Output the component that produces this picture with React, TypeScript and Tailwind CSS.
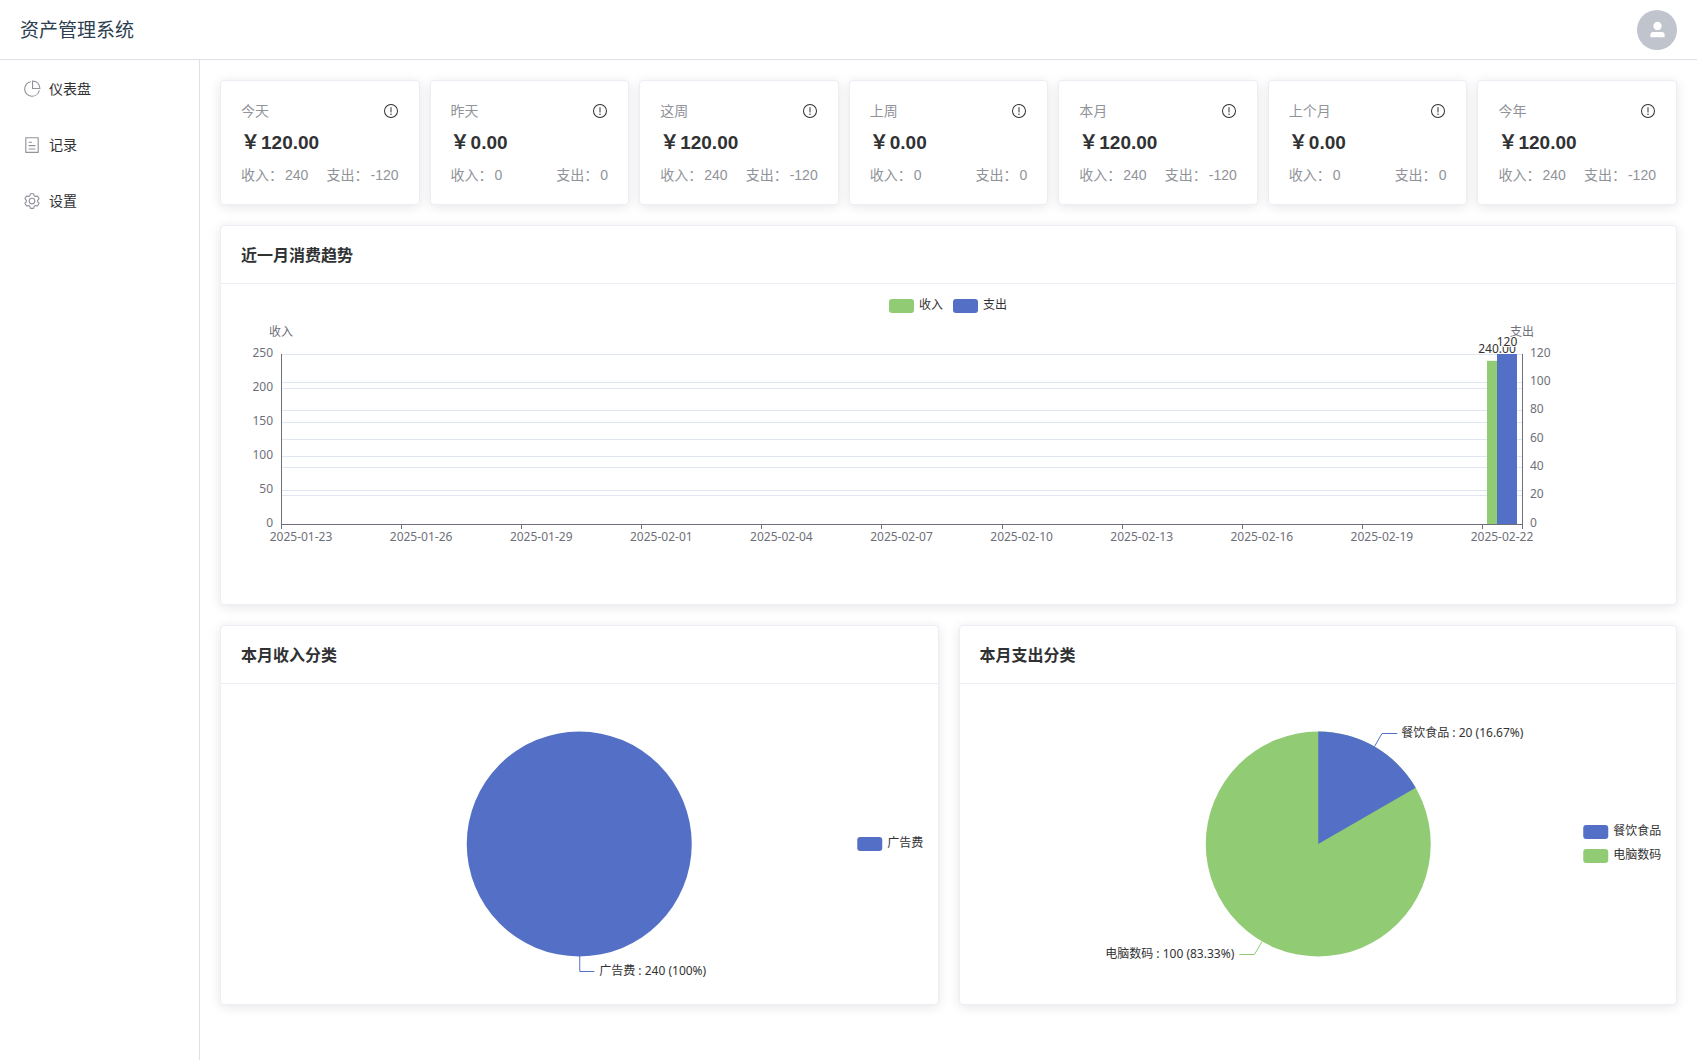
import type { ReactNode } from 'react'

const ICONS = {
    pie: 'M448 68.48v64.832A384.128 384.128 0 0 0 512 896a384.128 384.128 0 0 0 378.688-320h64.768A448.128 448.128 0 0 1 64 512 448.128 448.128 0 0 1 448 68.48z M576 97.28V448h350.72A384.064 384.064 0 0 0 576 97.28zM512 64V33.152A448 448 0 0 1 990.848 512H512V64z',
    tickets: 'M192 128v768h640V128H192zm-32-64h704a32 32 0 0 1 32 32v832a32 32 0 0 1-32 32H160a32 32 0 0 1-32-32V96a32 32 0 0 1 32-32zm160 448h384v64H320v-64zm0-192h192v64H320v-64zm0 384h384v64H320v-64z',
    setting: 'M600.704 64a32 32 0 0 1 30.464 22.208l35.2 109.376c14.784 7.232 28.928 15.36 42.432 24.512l112.384-24.192a32 32 0 0 1 34.432 15.36L944.32 364.8a32 32 0 0 1-4.032 37.504l-77.12 85.12a357.12 357.12 0 0 1 0 49.024l77.12 85.248a32 32 0 0 1 4.032 37.504l-88.704 153.6a32 32 0 0 1-34.432 15.296L708.8 803.904c-13.44 9.088-27.648 17.28-42.368 24.512l-35.264 109.376A32 32 0 0 1 600.704 960H423.296a32 32 0 0 1-30.464-22.208L357.696 828.48a351.616 351.616 0 0 1-42.56-24.64l-112.32 24.256a32 32 0 0 1-34.432-15.36L79.68 659.2a32 32 0 0 1 4.032-37.504l77.12-85.248a357.12 357.12 0 0 1 0-48.896l-77.12-85.248A32 32 0 0 1 79.68 364.8l88.704-153.6a32 32 0 0 1 34.432-15.296l112.32 24.256c13.568-9.152 27.776-17.408 42.56-24.64l35.2-109.312A32 32 0 0 1 423.232 64H600.64zm-23.424 64H446.72l-36.352 113.088-24.512 11.968a294.113 294.113 0 0 0-34.816 20.096l-22.656 15.36-116.224-25.088-65.28 113.152 79.68 88.192-1.92 27.136a293.12 293.12 0 0 0 0 40.192l1.92 27.136-79.808 88.192 65.344 113.152 116.224-25.024 22.656 15.296a294.113 294.113 0 0 0 34.816 20.096l24.512 11.968L446.72 896h130.688l36.48-113.152 24.448-11.904a288.282 288.282 0 0 0 34.752-20.096l22.592-15.296 116.288 25.024 65.28-113.152-79.744-88.192 1.92-27.136a293.12 293.12 0 0 0 0-40.256l-1.92-27.136 79.808-88.128-65.344-113.152-116.288 24.96-22.592-15.232a287.616 287.616 0 0 0-34.752-20.096l-24.448-11.904L577.344 128zM512 320a192 192 0 1 1 0 384 192 192 0 0 1 0-384zm0 64a128 128 0 1 0 0 256 128 128 0 0 0 0-256z',
    warning: 'M512 64a448 448 0 1 1 0 896 448 448 0 0 1 0-896zm0 832a384 384 0 0 0 0-768 384 384 0 0 0 0 768zm48-176a48 48 0 1 1-96 0 48 48 0 0 1 96 0zm-48-464a32 32 0 0 1 32 32v288a32 32 0 0 1-64 0V288a32 32 0 0 1 32-32z',
    user: 'M288 320a224 224 0 1 0 448 0 224 224 0 1 0-448 0zm544 608H160a32 32 0 0 1-32-32v-96a160 160 0 0 1 160-160h448a160 160 0 0 1 160 160v96a32 32 0 0 1-32 32z',
}

const MENU = [
    { label: '仪表盘', icon: ICONS.pie },
    { label: '记录', icon: ICONS.tickets },
    { label: '设置', icon: ICONS.setting },
]

const STATS = [
    { label: '今天', total: '120.00', income: '240', expense: '-120' },
    { label: '昨天', total: '0.00', income: '0', expense: '0' },
    { label: '这周', total: '120.00', income: '240', expense: '-120' },
    { label: '上周', total: '0.00', income: '0', expense: '0' },
    { label: '本月', total: '120.00', income: '240', expense: '-120' },
    { label: '上个月', total: '0.00', income: '0', expense: '0' },
    { label: '今年', total: '120.00', income: '240', expense: '-120' },
]

const DATES = ['2025-01-23', '2025-01-26', '2025-01-29', '2025-02-01', '2025-02-04', '2025-02-07', '2025-02-10', '2025-02-13', '2025-02-16', '2025-02-19', '2025-02-22']

const BLUE = '#5470c6'
const GREEN = '#91cc75'
const AXIS = '#6e7079'

// plot area of the trend chart
const LEFT = 60
const RIGHT = 1301
const TOP = 70
const BOTTOM = 240
const DAYS = 31
const band = (RIGHT - LEFT) / DAYS

function Icon({ path, className }: { path: string; className: string }) {
    return (
        <svg viewBox="0 0 1024 1024" fill="currentColor" className={className} aria-hidden="true">
            <path d={path} />
        </svg>
    )
}

function Card({ title, children }: { title: string; children: ReactNode }) {
    return (
        <section className="min-w-0 rounded border border-[#ebeef5] bg-white shadow-[0_2px_12px_rgba(0,0,0,0.1)]">
            <h2 className="border-b border-[#ebeef5] px-5 pt-[17px] pb-[15px] text-base leading-[25px] font-bold text-[#303133]">{title}</h2>
            {children}
        </section>
    )
}

function Legend({ x, y, color, label }: { x: number; y: number; color: string; label: string }) {
    return (
        <g>
            <rect x={x} y={y} width={25} height={14} rx={3} fill={color} />
            <text x={x + 30} y={y + 10} fill="#333">{label}</text>
        </g>
    )
}

function TrendChart() {
    const leftTicks = [0, 50, 100, 150, 200, 250]
    const rightTicks = [0, 20, 40, 60, 80, 100, 120]
    const yLeft = (v: number) => BOTTOM - (v / 250) * (BOTTOM - TOP)
    const yRight = (v: number) => Math.floor(BOTTOM - (v / 120) * (BOTTOM - TOP))
    const xTick = (i: number) => Math.round(LEFT + band * i * 3) + 0.5

    return (
        <svg viewBox="0 0 1455 320" className="block h-auto w-full text-[12px]" role="img" aria-label="近一月消费趋势">
            <Legend x={668} y={15} color={GREEN} label="收入" />
            <Legend x={732} y={15} color={BLUE} label="支出" />

            <g stroke="#e0e6f1">
                {leftTicks.slice(1).map(v => <line key={v} x1={LEFT} x2={RIGHT} y1={yLeft(v) + 0.5} y2={yLeft(v) + 0.5} />)}
                {rightTicks.slice(1, -1).map(v => <line key={v} x1={LEFT} x2={RIGHT} y1={yRight(v) + 0.5} y2={yRight(v) + 0.5} />)}
            </g>

            <g fill={AXIS}>
                <text x={LEFT} y={52} textAnchor="middle">收入</text>
                <text x={RIGHT} y={52} textAnchor="middle">支出</text>
                {leftTicks.map(v => <text key={v} x={LEFT - 8} y={yLeft(v) + 3} textAnchor="end">{v}</text>)}
                {rightTicks.map(v => <text key={v} x={RIGHT + 8} y={yRight(v) + 3}>{v}</text>)}
                {DATES.map((d, i) => <text key={d} x={LEFT + band * (i * 3 + 0.5)} y={257} textAnchor="middle">{d}</text>)}
            </g>

            <rect x={1266} y={yLeft(240)} width={20} height={BOTTOM - yLeft(240)} fill={GREEN} />
            <rect x={1276} y={TOP} width={20} height={BOTTOM - TOP} fill={BLUE} />

            <g stroke={AXIS}>
                <line x1={LEFT + 0.5} x2={LEFT + 0.5} y1={TOP} y2={BOTTOM} />
                <line x1={RIGHT + 0.5} x2={RIGHT + 0.5} y1={TOP} y2={BOTTOM} />
                <line x1={LEFT} x2={RIGHT + 1} y1={BOTTOM + 0.5} y2={BOTTOM + 0.5} />
                {DATES.map((d, i) => <line key={d} x1={xTick(i)} x2={xTick(i)} y1={BOTTOM} y2={BOTTOM + 5} />)}
                <line x1={RIGHT + 0.5} x2={RIGHT + 0.5} y1={BOTTOM} y2={BOTTOM + 5} />
            </g>

            <g fill="#333" stroke="#fff" strokeWidth={2} paintOrder="stroke" textAnchor="middle">
                <text x={1276} y={69}>240.00</text>
                <text x={1286} y={62}>120</text>
            </g>
        </svg>
    )
}

function IncomePie() {
    return (
        <svg viewBox="0 0 716 320" className="block h-80 w-full text-[12px]" role="img" aria-label="本月收入分类">
            <circle cx={358} cy={160} r={112.5} fill={BLUE} />
            <path d="M358.5 272V287.5H373" fill="none" stroke={BLUE} />
            <text x={378} y={291} fill="#333">广告费 : 240 (100%)</text>
            <Legend x={636} y={153} color={BLUE} label="广告费" />
        </svg>
    )
}

function ExpensePie() {
    return (
        <svg viewBox="0 0 716 320" className="block h-80 w-full text-[12px]" role="img" aria-label="本月支出分类">
            <circle cx={358} cy={160} r={112.5} fill={GREEN} />
            <path d="M358 160V47.5A112.5 112.5 0 0 1 455.43 103.75Z" fill={BLUE} />
            <path d="M414.25 62.5L421.75 49.5H437" fill="none" stroke={BLUE} />
            <path d="M301.75 257.5L294.25 270.5H279" fill="none" stroke={GREEN} />
            <text x={441} y={53} fill="#333">餐饮食品 : 20 (16.67%)</text>
            <text x={274} y={274} textAnchor="end" fill="#333">电脑数码 : 100 (83.33%)</text>
            <Legend x={623} y={141} color={BLUE} label="餐饮食品" />
            <Legend x={623} y={165} color={GREEN} label="电脑数码" />
        </svg>
    )
}

export default function App() {
    return (
        <div className="flex min-h-screen flex-col bg-white font-['Liberation_Sans','Noto_Sans_CJK_SC',sans-serif] text-[#303133]">
            <header className="flex h-15 items-center justify-between border-b border-[#dcdfe6] px-5">
                <h1 className="font-['Noto_Sans_CJK_SC',sans-serif] text-[19px] text-[#2c3e50]">资产管理系统</h1>
                <button type="button" aria-label="用户" className="flex size-10 items-center justify-center rounded-full bg-[#c0c4cc] text-white">
                    <Icon path={ICONS.user} className="size-[19px]" />
                </button>
            </header>
            <div className="flex flex-1">
                <nav className="w-[200px] shrink-0 border-r border-[#dcdfe6] py-px">
                    {MENU.map(m => (
                        <a key={m.label} href="#" className="flex h-14 items-center px-5 text-sm">
                            <span className="mr-[5px] flex w-6 justify-center text-[#909399]"><Icon path={m.icon} className="size-[18px]" /></span>
                            {m.label}
                        </a>
                    ))}
                </nav>
                <main className="flex min-w-0 flex-1 flex-col gap-5 p-5">
                    <div className="grid grid-cols-7 gap-[10px]">
                        {STATS.map(s => (
                            <section key={s.label} className="flex flex-col gap-[10px] rounded border border-[#ebeef5] bg-white px-5 pt-5 pb-[19px] text-sm leading-5 whitespace-nowrap text-[#909399] shadow-[0_2px_12px_rgba(0,0,0,0.1)]">
                                <div className="flex h-5 items-center justify-between">
                                    <span>{s.label}</span>
                                    <button type="button" aria-label="说明" className="text-[#303133]"><Icon path={ICONS.warning} className="size-4" /></button>
                                </div>
                                <div className="flex gap-px text-[19px] leading-6 font-bold text-[#303133]">
                                    <span>￥</span>
                                    <span>{s.total}</span>
                                </div>
                                <div className="flex justify-between">
                                    <span className="flex gap-0.5"><span>收入：</span><span>{s.income}</span></span>
                                    <span className="flex gap-0.5"><span>支出：</span><span>{s.expense}</span></span>
                                </div>
                            </section>
                        ))}
                    </div>
                    <div className="contents font-['Noto_Sans','Noto_Sans_CJK_SC',sans-serif]">
                        <Card title="近一月消费趋势">
                            <TrendChart />
                        </Card>
                        <div className="grid grid-cols-2 gap-5">
                            <Card title="本月收入分类">
                                <IncomePie />
                            </Card>
                            <Card title="本月支出分类">
                                <ExpensePie />
                            </Card>
                        </div>
                    </div>
                </main>
            </div>
        </div>
    )
}
